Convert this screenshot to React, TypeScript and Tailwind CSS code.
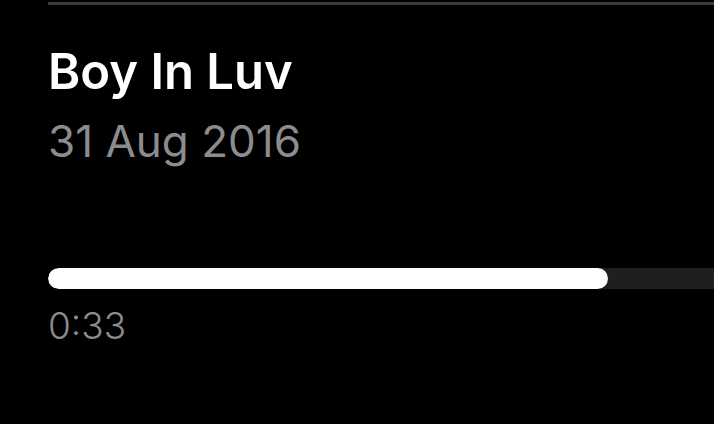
export default function App() {
  const progress = 0.841;
  return (
    <div className="w-[714px] h-[424px] bg-black overflow-hidden pl-12 pt-[2px] font-['Inter',sans-serif]">
      {/* divider */}
      <div className="h-[3px] bg-[#3a3a3c]" />

      <div className="mt-[37px]">
        <h1 className="text-[49px] leading-[60px] font-semibold text-white">Boy In Luv</h1>
        <p className="mt-[12px] text-[44px] leading-[54px] text-[#8c8c8e]">31 Aug 2016</p>
      </div>

      <div className="mt-[100px]">
        <div className="h-[21px] bg-[#1f1f1f] rounded-l-full overflow-hidden">
          <div className="h-full bg-white rounded-full" style={{ width: `${progress * 100}%` }} />
        </div>
        <div className="mt-[17px] text-[37px] leading-[40px] font-light text-[#8c8c8e]">0:33</div>
      </div>
    </div>
  );
}
